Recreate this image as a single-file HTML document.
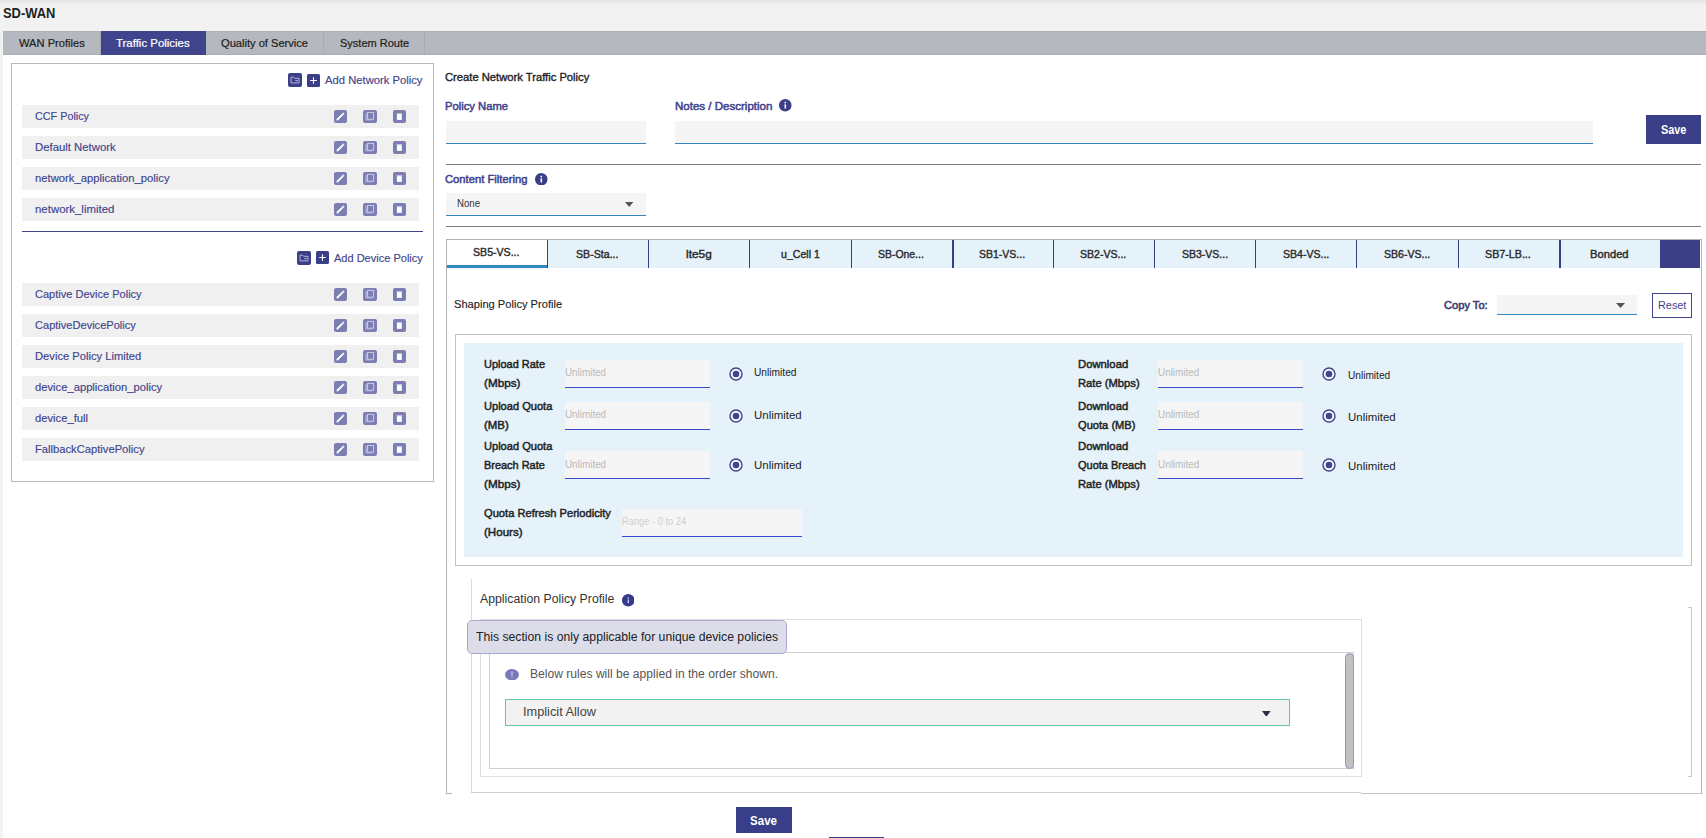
<!DOCTYPE html>
<html><head><meta charset="utf-8"><title>SD-WAN</title>
<style>
html,body{margin:0;padding:0;}
body{width:1706px;height:838px;position:relative;overflow:hidden;background:#f2f2f2;font-family:"Liberation Sans",sans-serif;}
body>div,body>svg,body>span{position:absolute;box-sizing:content-box;}
.t{white-space:pre;line-height:20px;transform-origin:0 50%;}
</style></head><body>
<div style="left:0px;top:0px;width:1706px;height:838px;background:#f2f2f2"></div>
<div style="left:0px;top:0px;width:1706px;height:5px;background:linear-gradient(#e4e4e4,#f2f2f2)"></div>
<div style="left:3px;top:31px;width:1703px;height:24px;background:#b5b8be;box-shadow:inset 0 1px 0 #adb0b8, inset 0 -1px 0 #aaadb9"></div>
<div style="left:3px;top:55px;width:1703px;height:783px;background:#fff"></div>
<div style="left:101px;top:31px;width:105px;height:24px;background:#3f448c"></div>
<div style="left:100px;top:31px;width:1px;height:24px;background:#a9acb3"></div>
<div style="left:323px;top:31px;width:1px;height:24px;background:#a9acb3"></div>
<div style="left:424px;top:31px;width:1px;height:24px;background:#a9acb3"></div>
<div style="left:11px;top:63px;width:421px;height:417px;border:1px solid #b8b8b8"></div>
<svg style="left:288px;top:73px" width="14" height="14" viewBox="0 0 14 14"><rect width="14" height="14" rx="2" fill="#3b3f87"/><path d="M3 4.2h2.6l1 1.1H11v4.6H3z" fill="none" stroke="#b2b4da" stroke-width="1"/><path d="M7.3 7.6h2.6" stroke="#b2b4da" stroke-width="1.1"/></svg>
<svg style="left:307px;top:74px" width="13" height="13" viewBox="0 0 13 13"><rect width="13" height="13" rx="1.5" fill="#3b3f87"/><path d="M6.5 3.2v6.6M3.2 6.5h6.6" stroke="#fff" stroke-width="1.1"/></svg>
<div style="left:22px;top:105px;width:397px;height:23px;background:#f0f0f0"></div>
<svg style="left:334px;top:110px" width="13" height="13" viewBox="0 0 13 13"><rect width="13" height="13" rx="2" fill="#7c7eb2"/><path d="M3.4 9.5L8.6 4.3" stroke="#fff" stroke-width="1.8" stroke-linecap="round"/><path d="M8.9 4L9.5 3.4" stroke="#e4e4f1" stroke-width="1.8" stroke-linecap="round"/></svg>
<svg style="left:363px;top:110px" width="14" height="13" viewBox="0 0 14 13"><rect width="14" height="13" rx="2" fill="#7c7eb2"/><path d="M2.2 3.2h2v6.4h4.8v1H2.2z" fill="#a3a5cc"/><rect x="4.6" y="2.4" width="6" height="6.8" fill="#7c7eb2" stroke="#d2d3e9" stroke-width="0.9"/></svg>
<svg style="left:393px;top:110px" width="13" height="13" viewBox="0 0 13 13"><rect width="13" height="13" rx="2" fill="#7c7eb2"/><rect x="3.9" y="4.1" width="4.9" height="5.8" fill="#fff"/><rect x="3.7" y="3" width="5.3" height="1" fill="#c3c4df"/></svg>
<div style="left:22px;top:136px;width:397px;height:23px;background:#f0f0f0"></div>
<svg style="left:334px;top:141px" width="13" height="13" viewBox="0 0 13 13"><rect width="13" height="13" rx="2" fill="#7c7eb2"/><path d="M3.4 9.5L8.6 4.3" stroke="#fff" stroke-width="1.8" stroke-linecap="round"/><path d="M8.9 4L9.5 3.4" stroke="#e4e4f1" stroke-width="1.8" stroke-linecap="round"/></svg>
<svg style="left:363px;top:141px" width="14" height="13" viewBox="0 0 14 13"><rect width="14" height="13" rx="2" fill="#7c7eb2"/><path d="M2.2 3.2h2v6.4h4.8v1H2.2z" fill="#a3a5cc"/><rect x="4.6" y="2.4" width="6" height="6.8" fill="#7c7eb2" stroke="#d2d3e9" stroke-width="0.9"/></svg>
<svg style="left:393px;top:141px" width="13" height="13" viewBox="0 0 13 13"><rect width="13" height="13" rx="2" fill="#7c7eb2"/><rect x="3.9" y="4.1" width="4.9" height="5.8" fill="#fff"/><rect x="3.7" y="3" width="5.3" height="1" fill="#c3c4df"/></svg>
<div style="left:22px;top:167px;width:397px;height:23px;background:#f0f0f0"></div>
<svg style="left:334px;top:172px" width="13" height="13" viewBox="0 0 13 13"><rect width="13" height="13" rx="2" fill="#7c7eb2"/><path d="M3.4 9.5L8.6 4.3" stroke="#fff" stroke-width="1.8" stroke-linecap="round"/><path d="M8.9 4L9.5 3.4" stroke="#e4e4f1" stroke-width="1.8" stroke-linecap="round"/></svg>
<svg style="left:363px;top:172px" width="14" height="13" viewBox="0 0 14 13"><rect width="14" height="13" rx="2" fill="#7c7eb2"/><path d="M2.2 3.2h2v6.4h4.8v1H2.2z" fill="#a3a5cc"/><rect x="4.6" y="2.4" width="6" height="6.8" fill="#7c7eb2" stroke="#d2d3e9" stroke-width="0.9"/></svg>
<svg style="left:393px;top:172px" width="13" height="13" viewBox="0 0 13 13"><rect width="13" height="13" rx="2" fill="#7c7eb2"/><rect x="3.9" y="4.1" width="4.9" height="5.8" fill="#fff"/><rect x="3.7" y="3" width="5.3" height="1" fill="#c3c4df"/></svg>
<div style="left:22px;top:198px;width:397px;height:23px;background:#f0f0f0"></div>
<svg style="left:334px;top:203px" width="13" height="13" viewBox="0 0 13 13"><rect width="13" height="13" rx="2" fill="#7c7eb2"/><path d="M3.4 9.5L8.6 4.3" stroke="#fff" stroke-width="1.8" stroke-linecap="round"/><path d="M8.9 4L9.5 3.4" stroke="#e4e4f1" stroke-width="1.8" stroke-linecap="round"/></svg>
<svg style="left:363px;top:203px" width="14" height="13" viewBox="0 0 14 13"><rect width="14" height="13" rx="2" fill="#7c7eb2"/><path d="M2.2 3.2h2v6.4h4.8v1H2.2z" fill="#a3a5cc"/><rect x="4.6" y="2.4" width="6" height="6.8" fill="#7c7eb2" stroke="#d2d3e9" stroke-width="0.9"/></svg>
<svg style="left:393px;top:203px" width="13" height="13" viewBox="0 0 13 13"><rect width="13" height="13" rx="2" fill="#7c7eb2"/><rect x="3.9" y="4.1" width="4.9" height="5.8" fill="#fff"/><rect x="3.7" y="3" width="5.3" height="1" fill="#c3c4df"/></svg>
<div style="left:22px;top:231px;width:401px;height:1px;background:#3f448c"></div>
<svg style="left:297px;top:251px" width="14" height="14" viewBox="0 0 14 14"><rect width="14" height="14" rx="2" fill="#3b3f87"/><path d="M3 4.2h2.6l1 1.1H11v4.6H3z" fill="none" stroke="#b2b4da" stroke-width="1"/><path d="M7.3 7.6h2.6" stroke="#b2b4da" stroke-width="1.1"/></svg>
<svg style="left:316px;top:251px" width="13" height="13" viewBox="0 0 13 13"><rect width="13" height="13" rx="1.5" fill="#3b3f87"/><path d="M6.5 3.2v6.6M3.2 6.5h6.6" stroke="#fff" stroke-width="1.1"/></svg>
<div style="left:22px;top:283px;width:397px;height:23px;background:#f0f0f0"></div>
<svg style="left:334px;top:288px" width="13" height="13" viewBox="0 0 13 13"><rect width="13" height="13" rx="2" fill="#7c7eb2"/><path d="M3.4 9.5L8.6 4.3" stroke="#fff" stroke-width="1.8" stroke-linecap="round"/><path d="M8.9 4L9.5 3.4" stroke="#e4e4f1" stroke-width="1.8" stroke-linecap="round"/></svg>
<svg style="left:363px;top:288px" width="14" height="13" viewBox="0 0 14 13"><rect width="14" height="13" rx="2" fill="#7c7eb2"/><path d="M2.2 3.2h2v6.4h4.8v1H2.2z" fill="#a3a5cc"/><rect x="4.6" y="2.4" width="6" height="6.8" fill="#7c7eb2" stroke="#d2d3e9" stroke-width="0.9"/></svg>
<svg style="left:393px;top:288px" width="13" height="13" viewBox="0 0 13 13"><rect width="13" height="13" rx="2" fill="#7c7eb2"/><rect x="3.9" y="4.1" width="4.9" height="5.8" fill="#fff"/><rect x="3.7" y="3" width="5.3" height="1" fill="#c3c4df"/></svg>
<div style="left:22px;top:314px;width:397px;height:23px;background:#f0f0f0"></div>
<svg style="left:334px;top:319px" width="13" height="13" viewBox="0 0 13 13"><rect width="13" height="13" rx="2" fill="#7c7eb2"/><path d="M3.4 9.5L8.6 4.3" stroke="#fff" stroke-width="1.8" stroke-linecap="round"/><path d="M8.9 4L9.5 3.4" stroke="#e4e4f1" stroke-width="1.8" stroke-linecap="round"/></svg>
<svg style="left:363px;top:319px" width="14" height="13" viewBox="0 0 14 13"><rect width="14" height="13" rx="2" fill="#7c7eb2"/><path d="M2.2 3.2h2v6.4h4.8v1H2.2z" fill="#a3a5cc"/><rect x="4.6" y="2.4" width="6" height="6.8" fill="#7c7eb2" stroke="#d2d3e9" stroke-width="0.9"/></svg>
<svg style="left:393px;top:319px" width="13" height="13" viewBox="0 0 13 13"><rect width="13" height="13" rx="2" fill="#7c7eb2"/><rect x="3.9" y="4.1" width="4.9" height="5.8" fill="#fff"/><rect x="3.7" y="3" width="5.3" height="1" fill="#c3c4df"/></svg>
<div style="left:22px;top:345px;width:397px;height:23px;background:#f0f0f0"></div>
<svg style="left:334px;top:350px" width="13" height="13" viewBox="0 0 13 13"><rect width="13" height="13" rx="2" fill="#7c7eb2"/><path d="M3.4 9.5L8.6 4.3" stroke="#fff" stroke-width="1.8" stroke-linecap="round"/><path d="M8.9 4L9.5 3.4" stroke="#e4e4f1" stroke-width="1.8" stroke-linecap="round"/></svg>
<svg style="left:363px;top:350px" width="14" height="13" viewBox="0 0 14 13"><rect width="14" height="13" rx="2" fill="#7c7eb2"/><path d="M2.2 3.2h2v6.4h4.8v1H2.2z" fill="#a3a5cc"/><rect x="4.6" y="2.4" width="6" height="6.8" fill="#7c7eb2" stroke="#d2d3e9" stroke-width="0.9"/></svg>
<svg style="left:393px;top:350px" width="13" height="13" viewBox="0 0 13 13"><rect width="13" height="13" rx="2" fill="#7c7eb2"/><rect x="3.9" y="4.1" width="4.9" height="5.8" fill="#fff"/><rect x="3.7" y="3" width="5.3" height="1" fill="#c3c4df"/></svg>
<div style="left:22px;top:376px;width:397px;height:23px;background:#f0f0f0"></div>
<svg style="left:334px;top:381px" width="13" height="13" viewBox="0 0 13 13"><rect width="13" height="13" rx="2" fill="#7c7eb2"/><path d="M3.4 9.5L8.6 4.3" stroke="#fff" stroke-width="1.8" stroke-linecap="round"/><path d="M8.9 4L9.5 3.4" stroke="#e4e4f1" stroke-width="1.8" stroke-linecap="round"/></svg>
<svg style="left:363px;top:381px" width="14" height="13" viewBox="0 0 14 13"><rect width="14" height="13" rx="2" fill="#7c7eb2"/><path d="M2.2 3.2h2v6.4h4.8v1H2.2z" fill="#a3a5cc"/><rect x="4.6" y="2.4" width="6" height="6.8" fill="#7c7eb2" stroke="#d2d3e9" stroke-width="0.9"/></svg>
<svg style="left:393px;top:381px" width="13" height="13" viewBox="0 0 13 13"><rect width="13" height="13" rx="2" fill="#7c7eb2"/><rect x="3.9" y="4.1" width="4.9" height="5.8" fill="#fff"/><rect x="3.7" y="3" width="5.3" height="1" fill="#c3c4df"/></svg>
<div style="left:22px;top:407px;width:397px;height:23px;background:#f0f0f0"></div>
<svg style="left:334px;top:412px" width="13" height="13" viewBox="0 0 13 13"><rect width="13" height="13" rx="2" fill="#7c7eb2"/><path d="M3.4 9.5L8.6 4.3" stroke="#fff" stroke-width="1.8" stroke-linecap="round"/><path d="M8.9 4L9.5 3.4" stroke="#e4e4f1" stroke-width="1.8" stroke-linecap="round"/></svg>
<svg style="left:363px;top:412px" width="14" height="13" viewBox="0 0 14 13"><rect width="14" height="13" rx="2" fill="#7c7eb2"/><path d="M2.2 3.2h2v6.4h4.8v1H2.2z" fill="#a3a5cc"/><rect x="4.6" y="2.4" width="6" height="6.8" fill="#7c7eb2" stroke="#d2d3e9" stroke-width="0.9"/></svg>
<svg style="left:393px;top:412px" width="13" height="13" viewBox="0 0 13 13"><rect width="13" height="13" rx="2" fill="#7c7eb2"/><rect x="3.9" y="4.1" width="4.9" height="5.8" fill="#fff"/><rect x="3.7" y="3" width="5.3" height="1" fill="#c3c4df"/></svg>
<div style="left:22px;top:438px;width:397px;height:23px;background:#f0f0f0"></div>
<svg style="left:334px;top:443px" width="13" height="13" viewBox="0 0 13 13"><rect width="13" height="13" rx="2" fill="#7c7eb2"/><path d="M3.4 9.5L8.6 4.3" stroke="#fff" stroke-width="1.8" stroke-linecap="round"/><path d="M8.9 4L9.5 3.4" stroke="#e4e4f1" stroke-width="1.8" stroke-linecap="round"/></svg>
<svg style="left:363px;top:443px" width="14" height="13" viewBox="0 0 14 13"><rect width="14" height="13" rx="2" fill="#7c7eb2"/><path d="M2.2 3.2h2v6.4h4.8v1H2.2z" fill="#a3a5cc"/><rect x="4.6" y="2.4" width="6" height="6.8" fill="#7c7eb2" stroke="#d2d3e9" stroke-width="0.9"/></svg>
<svg style="left:393px;top:443px" width="13" height="13" viewBox="0 0 13 13"><rect width="13" height="13" rx="2" fill="#7c7eb2"/><rect x="3.9" y="4.1" width="4.9" height="5.8" fill="#fff"/><rect x="3.7" y="3" width="5.3" height="1" fill="#c3c4df"/></svg>
<div style="left:446px;top:121px;width:200px;height:22px;background:#f5f5f5;border-bottom:1px solid #3487c1"></div>
<div style="left:675px;top:121px;width:918px;height:22px;background:#f5f5f5;border-bottom:1px solid #3487c1"></div>
<svg style="left:779.25px;top:99.35px" width="12.5" height="12.5" viewBox="0 0 12 12"><circle cx="6" cy="6" r="6" fill="#3b3f87"/><rect x="5.3" y="5.1" width="1.5" height="4" fill="#fff"/><rect x="5.3" y="2.7" width="1.5" height="1.5" fill="#fff"/></svg>
<svg style="left:535.25px;top:172.65px" width="12.5" height="12.5" viewBox="0 0 12 12"><circle cx="6" cy="6" r="6" fill="#3b3f87"/><rect x="5.3" y="5.1" width="1.5" height="4" fill="#fff"/><rect x="5.3" y="2.7" width="1.5" height="1.5" fill="#fff"/></svg>
<div style="left:1646px;top:115px;width:55px;height:29px;background:#3b3f87"></div>
<div style="left:446px;top:164px;width:1255px;height:1px;background:#7d7d7d"></div>
<div style="left:446px;top:193px;width:200px;height:22px;background:#f5f5f5;border-bottom:1px solid #3487c1"></div>
<svg style="left:625.4px;top:202px" width="8.4" height="5" viewBox="0 0 8.4 5"><path d="M0 0h8.4l-4.2 5z" fill="#555"/></svg>
<div style="left:446px;top:226px;width:1255px;height:1px;background:#7d7d7d"></div>
<div style="left:446px;top:239px;width:1254px;height:554px;border:1px solid #b3b3b3;border-bottom:none"></div>
<div style="left:447px;top:240px;width:1253px;height:28px;background:#e5f2f9"></div>
<div style="left:447px;top:240px;width:100.6px;height:25px;background:#fff"></div>
<div style="left:447px;top:265px;width:100.6px;height:3px;background:#3487c1"></div>
<div style="left:547.1px;top:240px;width:1px;height:28px;background:#383c86"></div>
<div style="left:648.2px;top:240px;width:1px;height:28px;background:#383c86"></div>
<div style="left:749.4px;top:240px;width:1px;height:28px;background:#383c86"></div>
<div style="left:850.6px;top:240px;width:1px;height:28px;background:#383c86"></div>
<div style="left:951.7px;top:240px;width:2px;height:28px;background:#383c86"></div>
<div style="left:1052.9px;top:240px;width:1px;height:28px;background:#383c86"></div>
<div style="left:1154.1px;top:240px;width:1px;height:28px;background:#383c86"></div>
<div style="left:1255.2px;top:240px;width:1px;height:28px;background:#383c86"></div>
<div style="left:1356.4px;top:240px;width:1px;height:28px;background:#383c86"></div>
<div style="left:1457.6px;top:240px;width:1px;height:28px;background:#383c86"></div>
<div style="left:1558.7px;top:240px;width:2px;height:28px;background:#383c86"></div>
<div style="left:1660px;top:240px;width:40px;height:28px;background:#3d3f86"></div>
<div style="left:1497px;top:295px;width:140px;height:19px;background:#f5f5f5;border-bottom:1px solid #3487c1"></div>
<svg style="left:1616px;top:303.3px" width="9" height="5" viewBox="0 0 9 5"><path d="M0 0h9l-4.5 5z" fill="#555"/></svg>
<div style="left:1652px;top:293px;width:38px;height:23px;border:1px solid #3f448c;background:#fff"></div>
<div style="left:455px;top:334px;width:1235px;height:230px;border:1px solid #c2c2c2;background:#fff"></div>
<div style="left:464px;top:343px;width:1219px;height:214px;background:#e5f2f9"></div>
<div style="left:565px;top:360px;width:145px;height:27px;background:#f5f5f5;border-bottom:1px solid #3d47c9"></div>
<svg style="left:729px;top:366.9px" width="14" height="14" viewBox="0 0 14 14"><circle cx="7" cy="7" r="6" fill="#fff" fill-opacity="0.6" stroke="#3f448c" stroke-width="1.4"/><circle cx="7" cy="7" r="3.3" fill="#3f448c"/></svg>
<div style="left:565px;top:402px;width:145px;height:27px;background:#f5f5f5;border-bottom:1px solid #3d47c9"></div>
<svg style="left:729px;top:409.1px" width="14" height="14" viewBox="0 0 14 14"><circle cx="7" cy="7" r="6" fill="#fff" fill-opacity="0.6" stroke="#3f448c" stroke-width="1.4"/><circle cx="7" cy="7" r="3.3" fill="#3f448c"/></svg>
<div style="left:565px;top:451px;width:145px;height:27px;background:#f5f5f5;border-bottom:1px solid #3d47c9"></div>
<svg style="left:729px;top:458px" width="14" height="14" viewBox="0 0 14 14"><circle cx="7" cy="7" r="6" fill="#fff" fill-opacity="0.6" stroke="#3f448c" stroke-width="1.4"/><circle cx="7" cy="7" r="3.3" fill="#3f448c"/></svg>
<div style="left:1158px;top:360px;width:145px;height:27px;background:#f5f5f5;border-bottom:1px solid #3d47c9"></div>
<svg style="left:1322px;top:367.2px" width="14" height="14" viewBox="0 0 14 14"><circle cx="7" cy="7" r="6" fill="#fff" fill-opacity="0.6" stroke="#3f448c" stroke-width="1.4"/><circle cx="7" cy="7" r="3.3" fill="#3f448c"/></svg>
<div style="left:1158px;top:402px;width:145px;height:27px;background:#f5f5f5;border-bottom:1px solid #3d47c9"></div>
<svg style="left:1322px;top:409.4px" width="14" height="14" viewBox="0 0 14 14"><circle cx="7" cy="7" r="6" fill="#fff" fill-opacity="0.6" stroke="#3f448c" stroke-width="1.4"/><circle cx="7" cy="7" r="3.3" fill="#3f448c"/></svg>
<div style="left:1158px;top:451px;width:145px;height:27px;background:#f5f5f5;border-bottom:1px solid #3d47c9"></div>
<svg style="left:1322px;top:458.2px" width="14" height="14" viewBox="0 0 14 14"><circle cx="7" cy="7" r="6" fill="#fff" fill-opacity="0.6" stroke="#3f448c" stroke-width="1.4"/><circle cx="7" cy="7" r="3.3" fill="#3f448c"/></svg>
<div style="left:622px;top:509px;width:180px;height:27px;background:#f5f5f5;border-bottom:1px solid #3d47c9"></div>
<div style="left:471px;top:579px;width:1px;height:213px;background:#dcdcdc"></div>
<div style="left:471px;top:792px;width:890px;height:1px;background:#cfcfcf"></div>
<div style="left:1361px;top:793px;width:340px;height:1px;background:#c4c4c4"></div>
<div style="left:446px;top:793px;width:6px;height:1px;background:#b3b3b3"></div>
<div style="left:1691px;top:607px;width:1px;height:170px;background:#c9c9c9"></div>
<div style="left:1688px;top:607px;width:3px;height:1px;background:#c9c9c9"></div>
<div style="left:1688px;top:776px;width:3px;height:1px;background:#c9c9c9"></div>
<div style="left:480px;top:619px;width:880px;height:156px;border:1px solid #dedede"></div>
<div style="left:489px;top:652px;width:863px;height:115px;border:1px solid #cfcfcf"></div>
<svg style="left:621.75px;top:594.35px" width="12.5" height="12.5" viewBox="0 0 12 12"><circle cx="6" cy="6" r="6" fill="#343a8c"/><rect x="5.4" y="5.3" width="1.2" height="3.6" fill="#d5d6ec"/><rect x="5.4" y="3.2" width="1.2" height="1.3" fill="#d5d6ec"/></svg>
<div style="left:467px;top:620px;width:318px;height:32px;background:#dcdde9;border:1px solid #a7a9d3;border-radius:5px"></div>
<svg style="left:505px;top:668.5px" width="14" height="11.4" viewBox="0 0 14 11.4"><ellipse cx="7" cy="5.7" rx="7" ry="5.7" fill="#777bb9"/><rect x="6.5" y="2.6" width="1" height="4" fill="#d8d9ee"/><rect x="6.5" y="7.6" width="1" height="1.1" fill="#d8d9ee"/></svg>
<div style="left:505px;top:699px;width:783px;height:25px;background:#f2f2f2;border:1px solid #62c898"></div>
<svg style="left:1262.3px;top:710.5px" width="8.7" height="5.8" viewBox="0 0 8.7 5.8"><path d="M0 0h8.7l-4.35 5.8z" fill="#2a2f45"/></svg>
<div style="left:1345px;top:653px;width:7px;height:114px;background:#c1c1c1;border:1px solid #9597c4;border-radius:4.5px"></div>
<div style="left:735.5px;top:807px;width:56px;height:26px;background:#393e89"></div>
<div style="left:829px;top:837px;width:55px;height:1px;background:#393e89"></div>
<span class="t" style="left:2.5px;top:3.0px;font-size:14.5px;color:#1f1f1f;transform:scaleX(0.8893);font-weight:700;">SD-WAN</span>
<span class="t" style="left:18.7px;top:33.0px;font-size:11px;color:#1d1d1d;transform:scaleX(1.0123);-webkit-text-stroke:0.2px #1d1d1d;">WAN Profiles</span>
<span class="t" style="left:116.2px;top:33.0px;font-size:11px;color:#fff;transform:scaleX(1.0392);-webkit-text-stroke:0.2px #fff;">Traffic Policies</span>
<span class="t" style="left:221.3px;top:33.0px;font-size:11px;color:#1d1d1d;transform:scaleX(1.0092);-webkit-text-stroke:0.2px #1d1d1d;">Quality of Service</span>
<span class="t" style="left:340.1px;top:33.0px;font-size:11px;color:#1d1d1d;transform:scaleX(1.0015);-webkit-text-stroke:0.2px #1d1d1d;">System Route</span>
<span class="t" style="left:325.3px;top:70.0px;font-size:11px;color:#3f448c;transform:scaleX(1.0223);-webkit-text-stroke:0.15px #3f448c;">Add Network Policy</span>
<span class="t" style="left:34.7px;top:106.0px;font-size:11px;color:#3f448c;transform:scaleX(0.9815);-webkit-text-stroke:0.15px #3f448c;">CCF Policy</span>
<span class="t" style="left:34.7px;top:137.0px;font-size:11px;color:#3f448c;transform:scaleX(1.0311);-webkit-text-stroke:0.15px #3f448c;">Default Network</span>
<span class="t" style="left:34.7px;top:168.0px;font-size:11px;color:#3f448c;transform:scaleX(1.0238);-webkit-text-stroke:0.15px #3f448c;">network_application_policy</span>
<span class="t" style="left:34.7px;top:199.0px;font-size:11px;color:#3f448c;transform:scaleX(1.0390);-webkit-text-stroke:0.15px #3f448c;">network_limited</span>
<span class="t" style="left:333.9px;top:248.0px;font-size:11px;color:#3f448c;transform:scaleX(1.0016);-webkit-text-stroke:0.15px #3f448c;">Add Device Policy</span>
<span class="t" style="left:34.5px;top:284.0px;font-size:11px;color:#3f448c;transform:scaleX(1.0021);-webkit-text-stroke:0.15px #3f448c;">Captive Device Policy</span>
<span class="t" style="left:34.5px;top:315.0px;font-size:11px;color:#3f448c;transform:scaleX(1.0053);-webkit-text-stroke:0.15px #3f448c;">CaptiveDevicePolicy</span>
<span class="t" style="left:34.5px;top:346.0px;font-size:11px;color:#3f448c;transform:scaleX(1.0168);-webkit-text-stroke:0.15px #3f448c;">Device Policy Limited</span>
<span class="t" style="left:34.5px;top:377.0px;font-size:11px;color:#3f448c;transform:scaleX(1.0196);-webkit-text-stroke:0.15px #3f448c;">device_application_policy</span>
<span class="t" style="left:34.5px;top:408.0px;font-size:11px;color:#3f448c;transform:scaleX(1.0215);-webkit-text-stroke:0.15px #3f448c;">device_full</span>
<span class="t" style="left:34.5px;top:439.0px;font-size:11px;color:#3f448c;transform:scaleX(1.0176);-webkit-text-stroke:0.15px #3f448c;">FallbackCaptivePolicy</span>
<span class="t" style="left:445.3px;top:67.0px;font-size:11px;color:#222;transform:scaleX(1.0189);-webkit-text-stroke:0.35px #222;">Create Network Traffic Policy</span>
<span class="t" style="left:445.3px;top:96.0px;font-size:11px;color:#3f448c;transform:scaleX(1.0202);-webkit-text-stroke:0.5px #3f448c;">Policy Name</span>
<span class="t" style="left:674.7px;top:96.0px;font-size:11px;color:#3f448c;transform:scaleX(1.0480);-webkit-text-stroke:0.5px #3f448c;">Notes / Description</span>
<span class="t" style="left:445.3px;top:169.0px;font-size:11px;color:#3f448c;transform:scaleX(1.0208);-webkit-text-stroke:0.5px #3f448c;">Content Filtering</span>
<span class="t" style="left:457.1px;top:194.0px;font-size:10px;color:#333;transform:scaleX(0.9621);">None</span>
<span class="t" style="left:1660.7px;top:120.0px;font-size:12px;color:#fff;transform:scaleX(0.9061);font-weight:700;">Save</span>
<span class="t" style="left:454.3px;top:294.0px;font-size:11px;color:#222;transform:scaleX(1.0101);-webkit-text-stroke:0.12px #222;">Shaping Policy Profile</span>
<span class="t" style="left:1444.3px;top:295.0px;font-size:11px;color:#3a3c78;transform:scaleX(1.0111);-webkit-text-stroke:0.55px #3a3c78;">Copy To:</span>
<span class="t" style="left:1657.7px;top:295.0px;font-size:11px;color:#3f448c;transform:scaleX(0.9878);">Reset</span>
<span class="t" style="left:484.1px;top:354.0px;font-size:11px;color:#222;transform:scaleX(0.9974);-webkit-text-stroke:0.45px #222;">Upload Rate</span>
<span class="t" style="left:484.1px;top:373.0px;font-size:11px;color:#222;transform:scaleX(1.0633);-webkit-text-stroke:0.45px #222;">(Mbps)</span>
<span class="t" style="left:484.1px;top:396.0px;font-size:11px;color:#222;transform:scaleX(1.0060);-webkit-text-stroke:0.45px #222;">Upload Quota</span>
<span class="t" style="left:484.1px;top:415.0px;font-size:11px;color:#222;transform:scaleX(1.0366);-webkit-text-stroke:0.45px #222;">(MB)</span>
<span class="t" style="left:484.1px;top:436.0px;font-size:11px;color:#222;transform:scaleX(1.0060);-webkit-text-stroke:0.45px #222;">Upload Quota</span>
<span class="t" style="left:484.1px;top:455.0px;font-size:11px;color:#222;transform:scaleX(0.9942);-webkit-text-stroke:0.45px #222;">Breach Rate</span>
<span class="t" style="left:484.1px;top:474.0px;font-size:11px;color:#222;transform:scaleX(1.0633);-webkit-text-stroke:0.45px #222;">(Mbps)</span>
<span class="t" style="left:484.1px;top:503.0px;font-size:11px;color:#222;transform:scaleX(1.0124);-webkit-text-stroke:0.45px #222;">Quota Refresh Periodicity</span>
<span class="t" style="left:484.1px;top:522.0px;font-size:11px;color:#222;transform:scaleX(1.0526);-webkit-text-stroke:0.45px #222;">(Hours)</span>
<span class="t" style="left:1077.8px;top:354.0px;font-size:11px;color:#222;transform:scaleX(1.0261);-webkit-text-stroke:0.45px #222;">Download</span>
<span class="t" style="left:1077.8px;top:373.0px;font-size:11px;color:#222;transform:scaleX(1.0193);-webkit-text-stroke:0.45px #222;">Rate (Mbps)</span>
<span class="t" style="left:1077.8px;top:396.0px;font-size:11px;color:#222;transform:scaleX(1.0261);-webkit-text-stroke:0.45px #222;">Download</span>
<span class="t" style="left:1077.8px;top:415.0px;font-size:11px;color:#222;transform:scaleX(1.0113);-webkit-text-stroke:0.45px #222;">Quota (MB)</span>
<span class="t" style="left:1077.8px;top:436.0px;font-size:11px;color:#222;transform:scaleX(1.0261);-webkit-text-stroke:0.45px #222;">Download</span>
<span class="t" style="left:1077.8px;top:455.0px;font-size:11px;color:#222;transform:scaleX(0.9989);-webkit-text-stroke:0.45px #222;">Quota Breach</span>
<span class="t" style="left:1077.8px;top:474.0px;font-size:11px;color:#222;transform:scaleX(1.0193);-webkit-text-stroke:0.45px #222;">Rate (Mbps)</span>
<span class="t" style="left:564.5px;top:363.0px;font-size:10px;color:#b9b9b9;transform:scaleX(0.9859);">Unlimited</span>
<span class="t" style="left:564.5px;top:405.0px;font-size:10px;color:#b9b9b9;transform:scaleX(0.9859);">Unlimited</span>
<span class="t" style="left:564.5px;top:455.0px;font-size:10px;color:#b9b9b9;transform:scaleX(0.9859);">Unlimited</span>
<span class="t" style="left:621.5px;top:512.0px;font-size:10px;color:#cfcfcf;transform:scaleX(0.9298);">Range - 0 to 24</span>
<span class="t" style="left:1158.0px;top:363.0px;font-size:10px;color:#b9b9b9;transform:scaleX(0.9907);">Unlimited</span>
<span class="t" style="left:1158.0px;top:405.0px;font-size:10px;color:#b9b9b9;transform:scaleX(0.9907);">Unlimited</span>
<span class="t" style="left:1158.0px;top:455.0px;font-size:10px;color:#b9b9b9;transform:scaleX(0.9907);">Unlimited</span>
<span class="t" style="left:753.9px;top:363.0px;font-size:10px;color:#222;transform:scaleX(1.0195);">Unlimited</span>
<span class="t" style="left:754.0px;top:405.0px;font-size:11px;color:#222;transform:scaleX(1.0401);">Unlimited</span>
<span class="t" style="left:754.0px;top:455.0px;font-size:11px;color:#222;transform:scaleX(1.0401);">Unlimited</span>
<span class="t" style="left:1347.9px;top:366.0px;font-size:10px;color:#222;transform:scaleX(1.0123);">Unlimited</span>
<span class="t" style="left:1347.9px;top:407.0px;font-size:11px;color:#222;transform:scaleX(1.0401);">Unlimited</span>
<span class="t" style="left:1347.9px;top:456.0px;font-size:11px;color:#222;transform:scaleX(1.0401);">Unlimited</span>
<span class="t" style="left:480.1px;top:589.0px;font-size:12px;color:#333;transform:scaleX(1.0228);">Application Policy Profile</span>
<span class="t" style="left:475.8px;top:627.0px;font-size:12px;color:#222;transform:scaleX(1.0177);">This section is only applicable for unique device policies</span>
<span class="t" style="left:529.8px;top:664.0px;font-size:12px;color:#555;transform:scaleX(1.0080);">Below rules will be applied in the order shown.</span>
<span class="t" style="left:523.2px;top:702.0px;font-size:12px;color:#444;transform:scaleX(1.0628);">Implicit Allow</span>
<span class="t" style="left:749.6px;top:811.0px;font-size:12px;color:#fff;transform:scaleX(0.9632);font-weight:700;">Save</span>
<span class="t" style="left:473.2px;top:242.0px;font-size:11px;color:#2a2a2a;transform:scaleX(0.9628);-webkit-text-stroke:0.4px #2a2a2a;">SB5-VS...</span>
<span class="t" style="left:576.4px;top:244.0px;font-size:11px;color:#2a2a2a;transform:scaleX(0.9652);-webkit-text-stroke:0.4px #2a2a2a;">SB-Sta...</span>
<span class="t" style="left:685.9px;top:244.0px;font-size:11px;color:#2a2a2a;transform:scaleX(1.0813);-webkit-text-stroke:0.4px #2a2a2a;">lte5g</span>
<span class="t" style="left:780.6px;top:244.0px;font-size:11px;color:#2a2a2a;transform:scaleX(0.9614);-webkit-text-stroke:0.4px #2a2a2a;">u_Cell 1</span>
<span class="t" style="left:878.2px;top:244.0px;font-size:11px;color:#2a2a2a;transform:scaleX(0.9483);-webkit-text-stroke:0.4px #2a2a2a;">SB-One...</span>
<span class="t" style="left:979.3px;top:244.0px;font-size:11px;color:#2a2a2a;transform:scaleX(0.9545);-webkit-text-stroke:0.4px #2a2a2a;">SB1-VS...</span>
<span class="t" style="left:1080.3px;top:244.0px;font-size:11px;color:#2a2a2a;transform:scaleX(0.9587);-webkit-text-stroke:0.4px #2a2a2a;">SB2-VS...</span>
<span class="t" style="left:1181.6px;top:244.0px;font-size:11px;color:#2a2a2a;transform:scaleX(0.9545);-webkit-text-stroke:0.4px #2a2a2a;">SB3-VS...</span>
<span class="t" style="left:1282.7px;top:244.0px;font-size:11px;color:#2a2a2a;transform:scaleX(0.9587);-webkit-text-stroke:0.4px #2a2a2a;">SB4-VS...</span>
<span class="t" style="left:1383.8px;top:244.0px;font-size:11px;color:#2a2a2a;transform:scaleX(0.9587);-webkit-text-stroke:0.4px #2a2a2a;">SB6-VS...</span>
<span class="t" style="left:1485.2px;top:244.0px;font-size:11px;color:#2a2a2a;transform:scaleX(0.9729);-webkit-text-stroke:0.4px #2a2a2a;">SB7-LB...</span>
<span class="t" style="left:1590.0px;top:244.0px;font-size:11px;color:#2a2a2a;transform:scaleX(1.0175);-webkit-text-stroke:0.4px #2a2a2a;">Bonded</span>
</body></html>
